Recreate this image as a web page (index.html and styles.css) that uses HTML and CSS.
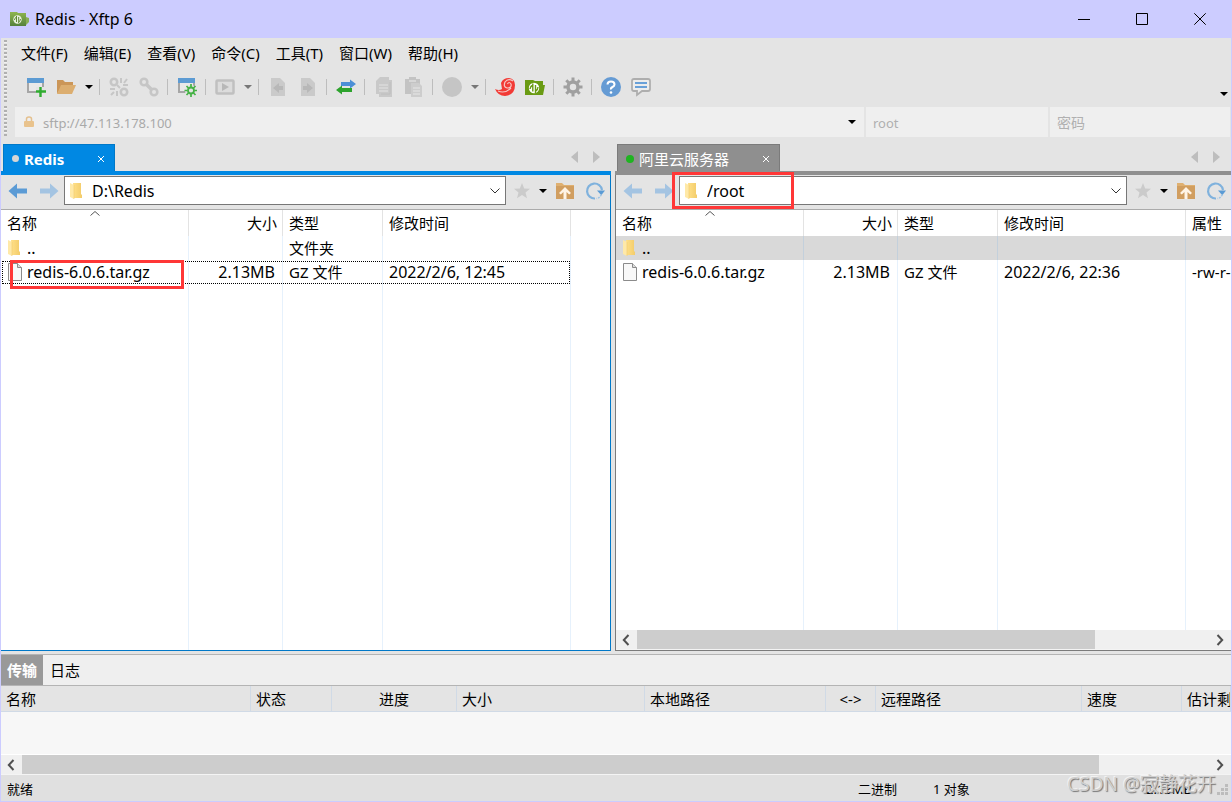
FILE: index.html
```html
<!DOCTYPE html>
<html lang="zh-CN">
<head>
<meta charset="utf-8">
<title>Redis - Xftp 6</title>
<link rel="stylesheet" href="styles.css">
</head>
<body>
<svg class="defs" aria-hidden="true">
  <defs>
    <linearGradient id="gold" x1="0" x2="1"><stop offset="0" stop-color="#ffe089"/><stop offset="1" stop-color="#f3cc6a"/></linearGradient>
    <linearGradient id="leaf" x1="0" x2="0" y1="0" y2="1"><stop offset="0" stop-color="#8fb64f"/><stop offset="1" stop-color="#55823c"/></linearGradient>
  </defs>
  <symbol id="i-folder" viewBox="0 0 14 18"><path d="M4 1h8v11l1 1v3H4z" fill="url(#gold)"/><path d="M1 1l4 2v14l-4-2z" fill="#ffe9a8"/><path d="M5 3v14" stroke="#f0ca6c" stroke-width=".6"/></symbol>
  <symbol id="i-file" viewBox="0 0 16 18"><path d="M1.500.5h9l4 4v13h-13z" fill="#f8f8f8" stroke="#8b8b8b"/><path d="M10.500.5v4h4" fill="#ddd" stroke="#8b8b8b"/></symbol>
  <symbol id="i-back" viewBox="0 0 20 16"><path d="M.5 8L9 .5V5.500h10v5H9v5z"/></symbol>
  <symbol id="i-fwd" viewBox="0 0 20 16"><path d="M19.500 8L11 .5V5.500H1v5h10v5z"/></symbol>
  <symbol id="i-star" viewBox="0 0 18 18"><path d="M9 1l2.200 5.400 5.800.4-4.500 3.700 1.500 5.700L9 13.100l-5 3.100 1.500-5.700L1 6.800l5.800-.4z" fill="#cbcbcb"/></symbol>
  <symbol id="i-up" viewBox="0 0 20 18"><path d="M1 17V1h6l2 2h10v14z" fill="#dfb071"/><path d="M1 4h18v13H1z" fill="#d19e60"/><path d="M10 5l6 6-1.800 1.500L11.500 10v7h-3v-7l-2.700 2.500L4 11z" fill="#fff4e6"/></symbol>
  <symbol id="i-refresh" viewBox="0 0 20 18"><path d="M10 16.500A7.500 7.500 0 1 1 17 8" fill="none" stroke="#80b2dd" stroke-width="2.200"/><path d="M12 8.500H20l-3.700 4.800z" fill="#5a9bd5"/><path d="M16.500 12.500Q14.500 16 11.500 16.600" fill="none" stroke="#9fc4e4" stroke-width="1.500" stroke-dasharray="2 1"/></symbol>
  <symbol id="i-caret" viewBox="0 0 8 4"><path d="M0 0h8L4 4z"/></symbol>
  <symbol id="i-down" viewBox="0 0 10 6"><path d="M.5.5L5 5 9.500.5" fill="none" stroke="#333"/></symbol>
  <symbol id="i-left" viewBox="0 0 8 12"><path d="M6.500 1L1.800 6l4.700 5" fill="none" stroke="#505050" stroke-width="2"/></symbol>
  <symbol id="i-right" viewBox="0 0 8 12"><path d="M1.500 1l4.700 5-4.700 5" fill="none" stroke="#505050" stroke-width="2"/></symbol>
  <symbol id="i-x" viewBox="0 0 8 8"><path d="M1 1l6 6M7 1L1 7" stroke="#fff" fill="none"/></symbol>
  <symbol id="i-gear" viewBox="0 0 20 20"><g fill="none" stroke="currentColor"><circle cx="10" cy="10" r="5" stroke-width="3.500"/><path d="M10 .5v4M10 15.500v4M.5 10h4M15.500 10h4M3.300 3.300l2.900 2.900M13.800 13.800l2.900 2.900M3.300 16.700l2.900-2.900M13.800 6.200l2.900-2.900" stroke-width="3"/></g></symbol>
  <symbol id="i-window" viewBox="0 0 20 20"><path d="M2 2h15v13H2z" fill="#e9e9e9" stroke="#a6a6a6" stroke-width="2"/><path d="M1 1h17v5H1z" fill="#5c9bd3"/></symbol>
</svg>

<div class="window">
  <header class="titlebar">
    <svg class="app-icon" viewBox="0 0 20 14"><path d="M0 0h7l1 1h8v13H0z" fill="url(#leaf)"/><path d="M16 5l3 1v4l-3 3z" fill="#89af55"/><circle cx="7.500" cy="7.500" r="4.200" fill="#e9f1de"/><path d="M6.500 4v6M6.500 5Q4.500 6 4.500 8M8.700 5v6M8.700 10Q10.500 9 10.500 7" stroke="#608b34" fill="none"/></svg>
    <h1 class="title">Redis - Xftp 6</h1>
    <div class="window-buttons">
      <button aria-label="最小化"><svg viewBox="0 0 12 12"><path d="M0 6.500h12"/></svg></button>
      <button aria-label="最大化"><svg viewBox="0 0 12 12"><path d="M.5.5h11v11H.5z"/></svg></button>
      <button aria-label="关闭"><svg viewBox="0 0 12 12"><path d="M.3.3l11.400 11.400M11.700.3L.3 11.700"/></svg></button>
    </div>
  </header>

  <div class="bars">
    <div class="grip"></div>
    <div class="bar-stack">
      <nav class="menu">
        <button>文件(F)</button><button>编辑(E)</button><button>查看(V)</button><button>命令(C)</button><button>工具(T)</button><button>窗口(W)</button><button>帮助(H)</button>
      </nav>
      <div class="toolbar">
        <button class="tool" aria-label="新建"><svg viewBox="0 0 20 20"><use href="#i-window"/><path d="M10 10h10v10H10z" fill="#e4e4e4"/><path d="M14.500 10v10M10 14.500h10" stroke="#2fac2f" stroke-width="2.400"/></svg></button>
        <button class="tool" aria-label="打开"><svg viewBox="0 0 20 20"><path d="M1 17V3h6l2 2h8v4H6z" fill="#cb9658"/><path d="M1 17L5 8h15l-4 9z" fill="#dcae70"/></svg></button>
        <button class="drop" aria-label="打开列表"><svg><use href="#i-caret"/></svg></button>
        <i class="sep"></i>
        <button class="tool" aria-label="断开" disabled><svg viewBox="0 0 20 20" fill="none" stroke="#c6c6c6"><circle cx="5" cy="5" r="3.200" stroke-width="2.600"/><circle cx="15" cy="15" r="3.200" stroke-width="2.600"/><path d="M8 8l3 3M12 1v5M14 8h5M15 6l3-4M1 12h5M8 14v5M5 15l-3 3" stroke-width="2"/></svg></button>
        <button class="tool" aria-label="连接" disabled><svg viewBox="0 0 20 20" fill="none" stroke="#c6c6c6"><circle cx="5" cy="5" r="3.300" stroke-width="2.600"/><circle cx="15" cy="15" r="3.300" stroke-width="2.600"/><path d="M7 7l6 6" stroke-width="3.400"/></svg></button>
        <i class="sep"></i>
        <button class="tool" aria-label="属性"><svg viewBox="0 0 20 20"><use href="#i-window"/><circle cx="14" cy="14" r="6" fill="#e4e4e4"/><g stroke="#45b245" fill="none"><circle cx="14" cy="13.500" r="3" stroke-width="1.800"/><path d="M14 7v3M14 17v3M7.500 13.500h3M17.500 13.500h3M9.500 9l2 2M16.500 16l2 2M9.500 18l2-2M16.500 11l2-2" stroke-width="1.700"/></g></svg></button>
        <i class="sep"></i>
        <button class="tool" aria-label="运行" disabled><svg viewBox="0 0 20 20"><rect x="1.500" y="3.500" width="17" height="13" rx="1" fill="#dcdcdc" stroke="#c0c0c0" stroke-width="2.500"/><path d="M7 6l7 4-7 4z" fill="#b8b8b8"/></svg></button>
        <button class="drop dim" aria-label="运行列表"><svg><use href="#i-caret"/></svg></button>
        <i class="sep"></i>
        <button class="tool" aria-label="传入" disabled><svg viewBox="0 0 20 20"><path d="M3 1h9l5 5v13H3z" fill="#cacaca"/><path d="M15 9h-4V6l-6 5 6 5v-3h4z" fill="#b8b8b8"/></svg></button>
        <button class="tool" aria-label="传出" disabled><svg viewBox="0 0 20 20"><path d="M3 1h9l5 5v13H3z" fill="#cacaca"/><path d="M5 9h4V6l6 5-6 5v-3H5z" fill="#b8b8b8"/></svg></button>
        <i class="sep"></i>
        <button class="tool" aria-label="同步"><svg viewBox="0 0 20 20"><path d="M5 5h9V2.500L20 7l-6 4.500V9H5z" fill="#4c8fd6"/><path d="M16 11H6V8.500L0 13l6 4.500V15h10z" fill="#2da32d"/></svg></button>
        <i class="sep"></i>
        <button class="tool" aria-label="复制" disabled><svg viewBox="0 0 20 20"><path d="M6 0h9v3h3v17H5v-3H2V4z" fill="#c9c9c9"/><path d="M5 8h9M5 11h9M5 14h9" stroke="#dadada" stroke-width="1.500"/><path d="M16 5v12H7" stroke="#bebebe" fill="none"/></svg></button>
        <button class="tool" aria-label="粘贴" disabled><svg viewBox="0 0 20 20"><path d="M1 2h4V0h7v2h4v15H1z" fill="#c3c3c3"/><path d="M7 6h8l3 3v11H7z" fill="#cdcdcd"/><path d="M9 11h7M9 14h7M9 17h7M5 4h7" stroke="#dedede" stroke-width="1.500"/></svg></button>
        <i class="sep"></i>
        <button class="tool" aria-label="停止" disabled><svg viewBox="0 0 20 20"><circle cx="10" cy="10" r="10" fill="#c5c5c5"/></svg></button>
        <button class="drop dim" aria-label="停止列表"><svg><use href="#i-caret"/></svg></button>
        <i class="sep"></i>
        <button class="tool" aria-label="Xshell"><svg viewBox="0 0 20 20"><path d="M0 12Q4 14 7 12L6 6Q8 1 14 1Q20 2 20 8Q20 18 10 19Q3 19 0 12z" fill="#f23a35"/><path d="M18 4Q13 1 10 5Q8 10 12 11Q17 11 16 7Q14 4 12.500 7M3 14Q10 17 16 11" fill="none" stroke="#f6c8c5" stroke-width="1.200"/></svg></button>
        <button class="tool" aria-label="Xftp"><svg viewBox="0 0 20 20"><path d="M0 3h8l2 1h8v4h2l-2 10H0z" fill="#6a9b13"/><circle cx="9" cy="11" r="5.200" fill="#fff"/><path d="M7.800 6.500v8M7.800 8Q5.500 9 5 12M10.500 8v8M10.500 14.500Q12.800 13 13 10" stroke="#6a9b13" stroke-width="1.400" fill="none"/></svg></button>
        <i class="sep"></i>
        <button class="tool gear" aria-label="选项"><svg><use href="#i-gear"/></svg></button>
        <i class="sep"></i>
        <button class="tool" aria-label="帮助"><svg viewBox="0 0 20 20"><circle cx="10" cy="10" r="10" fill="#659bd4"/><path d="M6.500 7.500Q6.500 4.500 10 4.500T13.500 7.500Q13.500 9 11.500 10T10 12.500" stroke="#fff" stroke-width="2" fill="none"/><circle cx="10" cy="15.500" r="1.300" fill="#fff"/></svg></button>
        <button class="tool" aria-label="反馈"><svg viewBox="0 0 20 20"><path d="M3 2h14q2 0 2 2v8q0 2-2 2H11l-5 4v-4H3q-2 0-2-2V4q0-2 2-2z" fill="#ececec" stroke="#aeaeae" stroke-width="1.800"/><path d="M4 6h12M4 10h12" stroke="#68a0d8" stroke-width="2"/></svg></button>
        <button class="drop more" aria-label="更多"><svg><use href="#i-caret"/></svg></button>
      </div>
    </div>
  </div>

  <form class="bars login">
    <div class="grip"></div>
    <div class="login-fields">
      <div class="field host">
        <svg class="lock" viewBox="0 0 10 12"><path d="M2.500 5V3q0-2 2.500-2t2.500 2v2" fill="none" stroke="#e4c08e" stroke-width="1.500"/><rect y="5" width="10" height="6" rx="1" fill="#e9c38d"/></svg>
        <input aria-label="主机" value="sftp://47.113.178.100">
        <button type="button" class="drop" aria-label="主机列表"><svg><use href="#i-caret"/></svg></button>
      </div>
      <input class="field" aria-label="用户名" placeholder="root">
      <input class="field" type="password" aria-label="密码" placeholder="密码">
    </div>
  </form>

  <main class="panes">
    <section class="pane active">
      <div class="tabs">
        <div class="tab"><i class="dot"></i><span class="tab-name">Redis</span><button aria-label="关闭标签"><svg><use href="#i-x"/></svg></button></div>
        <div class="tab-scroll"><svg viewBox="0 0 7 12"><path d="M7 0v12L0 6z"/></svg><svg viewBox="0 0 7 12"><path d="M0 0v12l7-6z"/></svg></div>
      </div>
      <div class="content">
        <div class="pathbar">
          <button class="step" aria-label="后退"><svg><use href="#i-back"/></svg></button>
          <button class="step faded" aria-label="前进"><svg><use href="#i-fwd"/></svg></button>
          <div class="path"><svg class="folder"><use href="#i-folder"/></svg><input aria-label="本地路径" value="D:\Redis"><button aria-label="路径列表"><svg><use href="#i-down"/></svg></button></div>
          <div class="path-tools"><button class="fav" aria-label="收藏"><svg><use href="#i-star"/></svg></button><button class="drop" aria-label="收藏列表"><svg><use href="#i-caret"/></svg></button><button class="tool" aria-label="上一级"><svg><use href="#i-up"/></svg></button><button class="tool" aria-label="刷新"><svg><use href="#i-refresh"/></svg></button></div>
        </div>
        <div class="listing">
          <table class="files">
            <colgroup><col class="w-name"><col class="w-size"><col class="w-type"><col class="w-time"><col></colgroup>
            <thead><tr><th>名称<svg class="sort" viewBox="0 0 10 5"><path d="M.5 4.500L5 .5l4.500 4" fill="none" stroke="#555"/></svg></th><th class="num">大小</th><th>类型</th><th>修改时间</th><th></th></tr></thead>
            <tbody>
              <tr><td><span class="name"><svg class="folder"><use href="#i-folder"/></svg>..</span></td><td></td><td>文件夹</td><td></td><td></td></tr>
              <tr class="focus"><td><span class="name"><svg class="file"><use href="#i-file"/></svg>redis-6.0.6.tar.gz</span></td><td class="num latin">2.13MB</td><td>GZ 文件</td><td class="latin">2022/2/6, 12:45</td><td></td></tr>
              <tr class="rest"><td></td><td></td><td></td><td></td><td></td></tr>
            </tbody>
          </table>
          <i class="mark mark-file"></i>
        </div>
      </div>
    </section>

    <section class="pane">
      <div class="tabs">
        <div class="tab"><i class="dot"></i><span class="tab-name">阿里云服务器</span><button aria-label="关闭标签"><svg><use href="#i-x"/></svg></button></div>
        <div class="tab-scroll"><svg viewBox="0 0 7 12"><path d="M7 0v12L0 6z"/></svg><svg viewBox="0 0 7 12"><path d="M0 0v12l7-6z"/></svg></div>
      </div>
      <div class="content">
        <div class="pathbar">
          <button class="step faded" aria-label="后退"><svg><use href="#i-back"/></svg></button>
          <button class="step faded" aria-label="前进"><svg><use href="#i-fwd"/></svg></button>
          <div class="path"><svg class="folder"><use href="#i-folder"/></svg><input aria-label="远程路径" value="/root"><button aria-label="路径列表"><svg><use href="#i-down"/></svg></button><i class="mark mark-path"></i></div>
          <div class="path-tools"><button class="fav" aria-label="收藏"><svg><use href="#i-star"/></svg></button><button class="drop" aria-label="收藏列表"><svg><use href="#i-caret"/></svg></button><button class="tool" aria-label="上一级"><svg><use href="#i-up"/></svg></button><button class="tool" aria-label="刷新"><svg><use href="#i-refresh"/></svg></button></div>
        </div>
        <div class="listing">
          <table class="files">
            <colgroup><col class="w-name"><col class="w-size"><col class="w-type"><col class="w-time"><col></colgroup>
            <thead><tr><th>名称<svg class="sort" viewBox="0 0 10 5"><path d="M.5 4.500L5 .5l4.500 4" fill="none" stroke="#555"/></svg></th><th class="num">大小</th><th>类型</th><th>修改时间</th><th>属性</th></tr></thead>
            <tbody>
              <tr class="selected"><td><span class="name"><svg class="folder"><use href="#i-folder"/></svg>..</span></td><td></td><td></td><td></td><td></td></tr>
              <tr><td><span class="name"><svg class="file"><use href="#i-file"/></svg>redis-6.0.6.tar.gz</span></td><td class="num latin">2.13MB</td><td>GZ 文件</td><td class="latin">2022/2/6, 22:36</td><td>-rw-r--r--</td></tr>
              <tr class="rest"><td></td><td></td><td></td><td></td><td></td></tr>
            </tbody>
          </table>
        </div>
        <div class="scroll scroll-files"><button aria-label="向左"><svg><use href="#i-left"/></svg></button><i class="thumb"></i><i class="track"></i><button aria-label="向右"><svg><use href="#i-right"/></svg></button></div>
      </div>
    </section>
  </main>

  <section class="transfers">
    <div class="views"><button class="current">传输</button><button>日志</button></div>
    <table class="queue">
      <colgroup><col class="q-name"><col class="q-state"><col class="q-progress"><col class="q-size"><col class="q-local"><col class="q-dir"><col class="q-remote"><col class="q-speed"><col></colgroup>
      <thead><tr><th>名称</th><th>状态</th><th class="mid">进度</th><th>大小</th><th>本地路径</th><th class="mid">&lt;-&gt;</th><th>远程路径</th><th>速度</th><th>估计剩余</th></tr></thead>
    </table>
    <div class="empty"></div>
    <div class="scroll scroll-queue"><button aria-label="向左"><svg><use href="#i-left"/></svg></button><i class="thumb"></i><i class="track"></i><button aria-label="向右"><svg><use href="#i-right"/></svg></button></div>
  </section>

  <footer class="status">
    <span class="ready">就绪</span><span class="mode">二进制</span><span class="count">1 对象</span><span class="total">2.13MB</span>
    <svg class="resize" viewBox="0 0 11 11"><path d="M8 0h3v3H8zM4 4h3v3H4zM8 4h3v3H8zM0 8h3v3H0zM4 8h3v3H4zM8 8h3v3H8z" fill="#bcbcbc"/></svg>
    <span class="watermark">CSDN @寂静花开</span>
  </footer>
</div>
</body>
</html>
```

FILE: styles.css
```css
* { box-sizing: border-box; }

body {
  margin: 0;
  color: #000;
  font: 15px/24px "Noto Sans", "Noto Sans CJK SC", sans-serif;
}

button, input { margin: 0; padding: 0; border: 0; background: none; color: inherit; font: inherit; }
button { display: flex; align-items: center; justify-content: center; white-space: nowrap; }
input { min-width: 0; outline: 0; }
svg { display: block; flex: none; }
.defs { position: absolute; width: 0; height: 0; }

.window {
  display: flex;
  flex-direction: column;
  height: 100vh;
  border: 1px solid #ccccff;
  border-top: 0;
  background: #e4e4e4;
  overflow: hidden;
}

/* title bar */
.titlebar { display: flex; align-items: center; flex: none; height: 38px; padding: 0 2px 0 9px; background: #ccccff; }
.app-icon { width: 20px; height: 14px; }
.title { flex: 1; margin: 0 0 0 5px; font-size: 16px; font-weight: 400; }
.window-buttons { display: flex; }
.window-buttons button { width: 58px; height: 38px; }
.window-buttons svg { width: 12px; height: 12px; fill: none; stroke: #000; }

/* menu and toolbar */
.bars { display: flex; flex: none; }
.grip {
  width: 3px;
  margin: 2px 8px 2px 3px;
  background: repeating-linear-gradient(#b0b0b0 0 2px, #f2f2f2 2px 3px, #e4e4e4 3px 4px);
}
.bar-stack { flex: 1; min-width: 0; }
.menu { display: flex; gap: 16px; height: 32px; padding: 0 0 2px 6px; }
.toolbar { display: flex; align-items: center; height: 34px; padding-left: 6px; }
.tool { width: 30px; height: 30px; flex: none; }
.tool svg { width: 20px; height: 20px; }
.drop { width: 15px; height: 30px; flex: none; }
.drop svg { width: 8px; height: 4px; }
.dim svg { fill: #777; }
.sep { flex: none; width: 1px; height: 16px; margin: 0 4px 0 3px; background: #bdbdbd; }
.gear { color: #a0a0a0; }
.more { margin-left: auto; align-items: flex-end; padding-bottom: 6px; }

/* login row */
.login { padding-top: 2px; height: 33px; }
.login .grip { margin: 0 8px 1px 3px; }
.login-fields { display: grid; grid-template-columns: 849fr 182fr 180fr; gap: 2px; flex: 1; height: 29px; margin: 1px 1px 0 0; }
.field { width: 100%; padding: 2px 7px 0; background: #efefef; color: #a9a9a9; font-size: 13px; }
.field::placeholder { color: #b0b0b0; }
.field[type="password"] { font-size: 14px; }
.host { display: flex; align-items: center; padding: 0 5px 0 9px; }
.host input { flex: 1; padding: 2px 0 0 9px; }
.lock { width: 10px; height: 12px; }

/* file panes */
.panes { display: grid; grid-template-columns: 610fr 616fr; gap: 4px; flex: 1; min-height: 0; padding-top: 7px; }
.pane { --tone: #8f8f8f; --edge: #7b7b7b; display: flex; flex-direction: column; min-width: 0; min-height: 0; }
.pane.active { --tone: #0088e3; --edge: #0078c8; }
.tabs { display: flex; align-items: flex-end; flex: none; height: 31px; padding-left: 2px; border-bottom: 4px solid var(--tone); }
.tab { display: flex; align-items: center; height: 27px; padding: 1px 9px 0 8px; background: var(--tone); border: 1px solid var(--edge); border-bottom: 0; color: #fff; }
.tab-name { width: 128px; padding-left: 5px; }
.active .tab-name { width: 78px; font-weight: 700; }
.tab svg { width: 8px; height: 8px; }
.dot { width: 8px; height: 8px; border-radius: 50%; background: #1fb421; }
.active .dot { width: 7px; height: 7px; background: #d6d6d6; }
.tab-scroll { display: flex; gap: 15px; margin-left: auto; padding: 0 11px 8px 0; fill: #bdbdbd; }
.tab-scroll svg { width: 7px; height: 12px; }

.content { display: flex; flex-direction: column; flex: 1; min-width: 0; min-height: 0; border-bottom: 1px solid var(--edge); border-left: 1px solid var(--edge); background: #fff; }
.active .content { border-left: 0; border-right: 1px solid var(--edge); }
.pathbar { display: flex; flex: none; height: 35px; padding: 1px 0 4px 1px; border-bottom: 1px solid #ababab; background: #e4e4e4; }
.step { width: 31px; fill: #5b9bd5; }
.step svg { width: 20px; height: 16px; }
.faded { fill: #a4c4e2; }
.path { position: relative; display: flex; align-items: center; flex: 1; min-width: 0; height: 29px; border: 1px solid #777; background: #fff; font-size: 16px; }
.folder { width: 14px; height: 18px; margin-right: 6px; }
.path .folder { margin: 0 9px 0 4px; }
.path input { flex: 1; height: 27px; }
.path button { width: 20px; height: 27px; }
.path button svg { width: 10px; height: 6px; }
.path-tools { display: flex; }
.fav { width: 29px; padding-left: 2px; }
.fav svg { width: 18px; height: 18px; }
.path-tools .tool svg { height: 18px; }
.path-tools .tool, .path-tools .drop { height: auto; }

.listing { position: relative; flex: 1; min-height: 0; overflow: hidden; }
.files { width: 100%; height: 100%; border-collapse: separate; border-spacing: 0; table-layout: fixed; }
.w-name, .w-time { width: 188px; }
.w-size { width: 94px; }
.w-type { width: 100px; }
.files th, .files td { height: 24px; padding: 0 6px; border-right: 1px solid #e6f1fc; text-align: left; font-weight: 400; white-space: nowrap; overflow: hidden; }
.files th { position: relative; height: 26px; border-color: #e3e3e3; }
.files th:last-child, .files td:last-child { border-right: 0; }
.files .rest td { height: auto; }
.files th.num { text-align: right; padding-right: 5px; }
.files td.num { text-align: right; padding-right: 7px; }
.files .latin, .name { font-size: 16px; }
.sort { position: absolute; top: 1px; left: 50%; width: 10px; height: 5px; margin-left: -5px; }
.name { display: flex; align-items: center; }
.file { width: 16px; height: 18px; margin-right: 4px; }
.selected td { background: #d9d9d9; border-color: #c3d0dc; }
.focus { position: relative; }
.focus::after { content: ""; position: absolute; inset: 1px 40px 0 1px; border: 1px dotted #000; }
.mark { position: absolute; border: 3px solid #ff3737; }
.mark-file { top: 50px; left: 9px; width: 174px; height: 29px; }
.mark-path { top: -5px; left: -8px; width: 122px; height: 37px; }

/* scroll bars */
.scroll { display: flex; flex: none; height: 20px; border-bottom: 1px solid #f4f4f4; background: #f0f0f0; }
.scroll button { width: 21px; flex: none; padding-right: 2px; }
.scroll svg { width: 8px; height: 12px; }
.thumb { background: #cdcdcd; }
.scroll-files .thumb { flex: 458; }
.scroll-files .track { flex: 115; }
.scroll-queue .thumb { flex: 1077; }
.scroll-queue .track { flex: 111; }

/* transfer list */
.transfers { flex: none; margin-top: 3px; border-top: 1px solid #b4b4b4; background: #f7f7f7; overflow: hidden; }
.views { display: flex; height: 31px; border-bottom: 1px solid #b4b4b4; background: #efefef; }
.views button { padding: 0 6px; }
.views .current { background: #999; color: #fff; font-weight: 700; }
.views button + button { padding-left: 7px; }
.queue { width: 100%; border-spacing: 0; table-layout: fixed; background: #e4e4e4; }
.queue th { height: 26px; padding: 0 5px; border-right: 1px solid #d0dae6; border-bottom: 1px solid #d0dae6; text-align: left; font-weight: 400; white-space: nowrap; overflow: hidden; }
.queue th.mid { text-align: center; }
.q-name { width: 250px; }
.q-state { width: 81px; }
.q-progress { width: 125px; }
.q-size { width: 188px; }
.q-local { width: 181px; }
.q-dir { width: 50px; }
.q-remote { width: 206px; }
.q-speed { width: 100px; }
.empty { height: 43px; border-bottom: 1px solid #fff; }

/* status bar */
.status { position: relative; display: flex; align-items: center; flex: none; height: 26px; padding: 2px 3px 0 6px; background: #e0e0e0; font-size: 13px; }
.ready { flex: 1; }
.mode { width: 75px; }
.count { width: 213px; }
.total { width: 71px; }
.resize { width: 11px; height: 11px; }
.watermark { position: absolute; right: 15px; bottom: 5px; color: #cfcfcf; font-size: 19px; text-shadow: 1px 1px 1px #777, -1px -1px 0 #f2f2f2; white-space: nowrap; }
```
